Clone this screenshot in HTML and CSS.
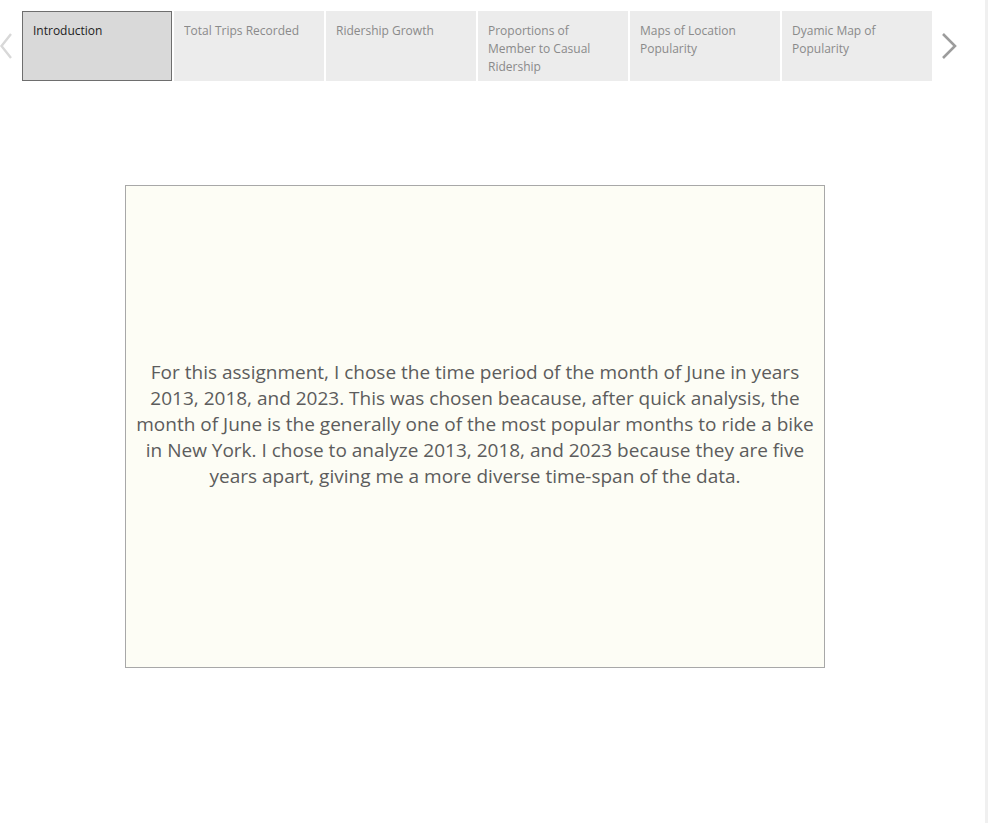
FILE: index.html
```html
<!DOCTYPE html>
<html>
<head>
<meta charset="utf-8">
<link rel="stylesheet" href="styles.css">
</head>
<body>
<div class="page">
  <div class="nav">
    <div class="arrow arrow-left">
      <svg width="14" height="26" viewBox="0 0 14 26"><path d="M11 1 L1.5 13 L11 25" fill="none" stroke="#d8d8d8" stroke-width="2.4"/></svg>
    </div>
    <div class="tabs">
      <div class="tab active"><div class="label">Introduction</div></div>
      <div class="tab"><div class="label">Total Trips Recorded</div></div>
      <div class="tab"><div class="label">Ridership Growth</div></div>
      <div class="tab"><div class="label">Proportions of Member to Casual Ridership</div></div>
      <div class="tab"><div class="label">Maps of Location Popularity</div></div>
      <div class="tab"><div class="label">Dyamic Map of Popularity</div></div>
    </div>
    <div class="arrow arrow-right">
      <svg width="17" height="26" viewBox="0 0 17 26"><path d="M2 1 L14 13 L2 25" fill="none" stroke="#9c9c9c" stroke-width="2.6"/></svg>
    </div>
  </div>
  <div class="stage">
    <div class="card">
      <p>For this assignment, I chose the time period of the month of June in years 2013, 2018, and 2023. This was chosen beacause, after quick analysis, the month of June is the generally one of the most popular months to ride a bike in New York. I chose to analyze 2013, 2018, and 2023 because they are five years apart, giving me a more diverse time-span of the data.</p>
    </div>
  </div>
  <div class="scrollbar"></div>
</div>
</body>
</html>
```

FILE: styles.css
```css
html, body {
  margin: 0;
  padding: 0;
  background: #ffffff;
}
body {
  font-family: "Open Sans", "Noto Sans", sans-serif;
}
.page {
  position: relative;
  width: 988px;
  height: 823px;
  overflow: hidden;
}
.nav {
  display: flex;
  align-items: flex-start;
  padding-top: 11px;
  height: 70px;
}
.arrow {
  height: 70px;
  display: flex;
  align-items: center;
}
.arrow-left {
  width: 22px;
}
.arrow-right {
  margin-left: 9px;
}
.tabs {
  display: flex;
  gap: 2px;
}
.tab {
  box-sizing: border-box;
  width: 150px;
  height: 70px;
  background: #ececec;
  color: #8a8a8a;
  font-size: 12px;
  line-height: 18px;
  padding: 11px 14px 0 10px;
}
.label {
  height: 52px;
  overflow: hidden;
}
.tab.active {
  background: #d9d9d9;
  border: 1px solid #6e6e6e;
  color: #222;
  padding: 10px 13px 0 10px;
}
.stage {
  display: flex;
  padding-top: 104px;
  padding-left: 125px;
}
.card {
  box-sizing: border-box;
  width: 700px;
  height: 483px;
  background: #fdfdf5;
  border: 1px solid #a8a8a8;
  display: flex;
  align-items: center;
  justify-content: center;
  padding: 0 8px 5px 8px;
}
.card p {
  margin: 0;
  text-align: center;
  font-size: 19px;
  line-height: 26px;
  color: #5c5c5c;
}
.scrollbar {
  position: absolute;
  top: 0;
  right: 0;
  width: 3px;
  height: 823px;
  background: #f0f0f0;
}
```
